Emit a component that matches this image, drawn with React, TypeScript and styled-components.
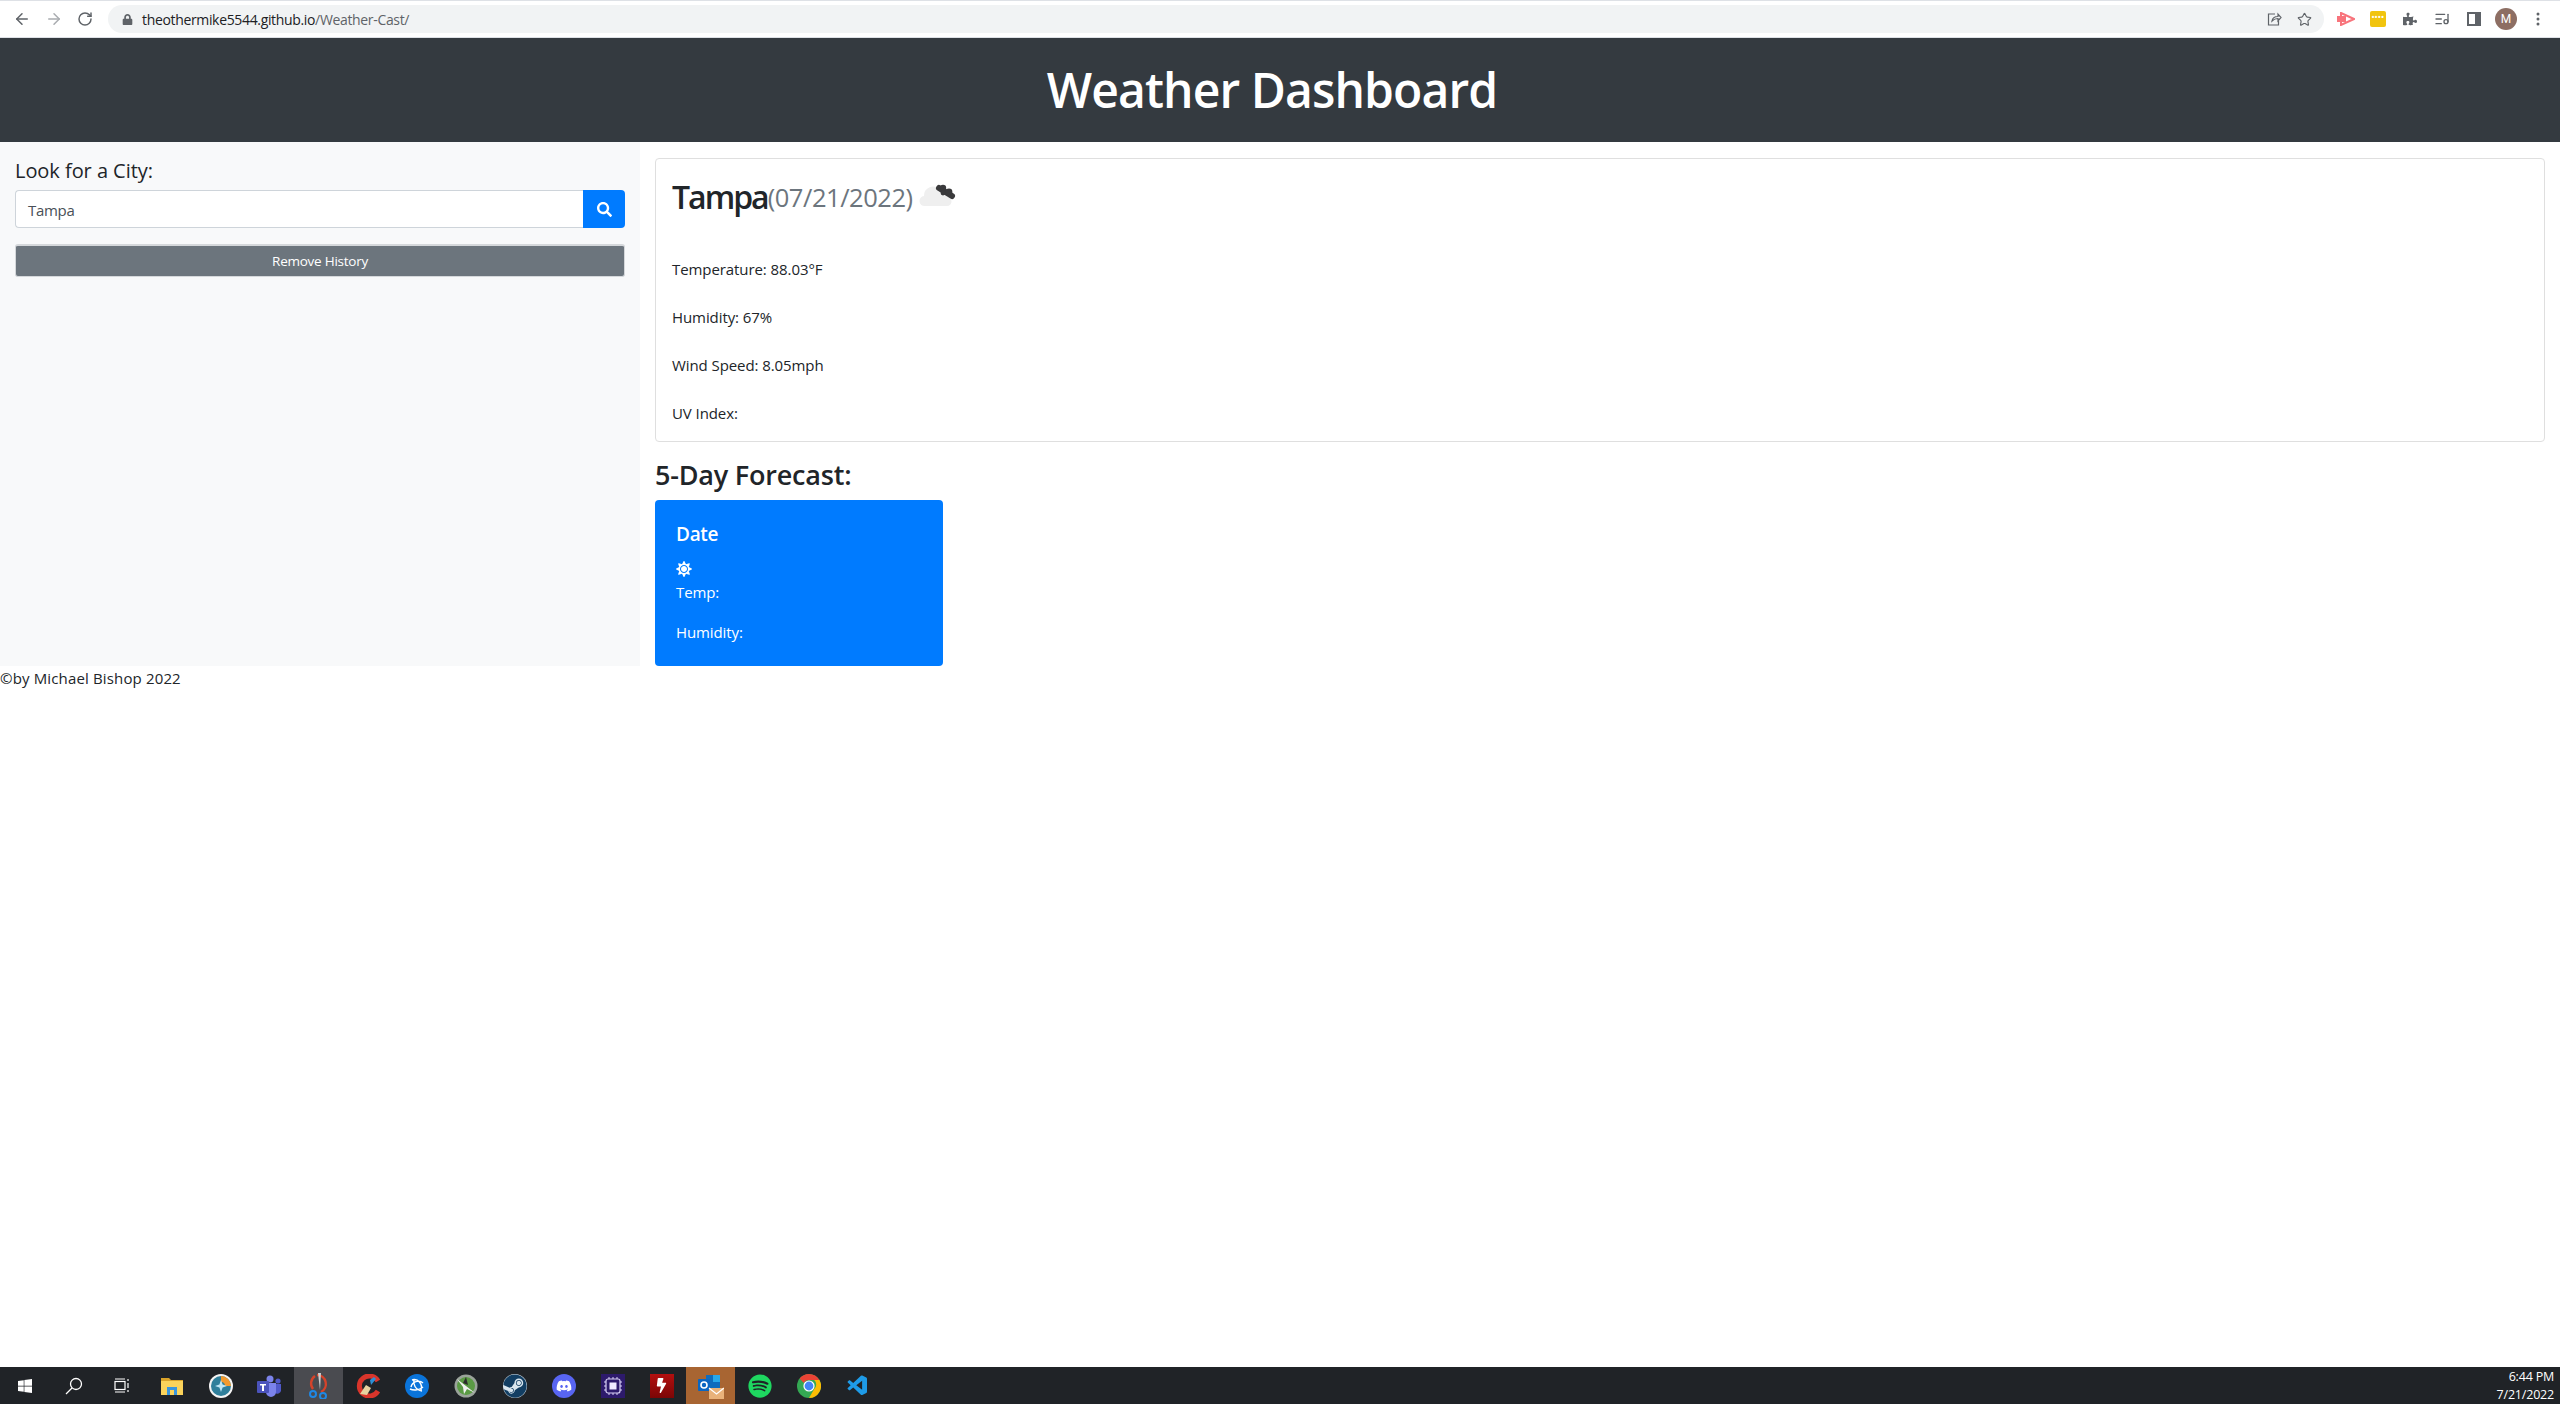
import React from "react";
import styled, { createGlobalStyle } from "styled-components";
import { ArrowLeft, ArrowRight, RotateCw, Star, ListMusic } from "lucide-react";
import { FaSearch, FaLock, FaPuzzlePiece, FaSun, FaWindows, FaSteam, FaDiscord, FaSpotify, FaBolt } from "react-icons/fa";
import { VscVscode } from "react-icons/vsc";

const Global = createGlobalStyle`
  html, body { margin: 0; padding: 0; background: #fff; }
  body { font-family: "Open Sans", "Noto Sans", "Liberation Sans", sans-serif; color: #212529; }
  #root { height: 1404px; overflow: hidden; }
  * { box-sizing: border-box; }
`;

const Page = styled.div`
  height: 1404px;
  display: flex;
  flex-direction: column;
`;

/* browser chrome */
const BrowserBar = styled.div`
  height: 38px;
  flex: none;
  display: flex;
  align-items: center;
  background: #fff;
  border-top: 1px solid #dee1e6;
  border-bottom: 1px solid #dee1e6;
  padding-left: 13px;
`;
const NavButton = styled.span<{ $muted?: boolean }>`
  width: 32px;
  height: 20px;
  flex: none;
  display: flex;
  justify-content: flex-start;
  align-items: center;
  color: ${(p) => (p.$muted ? "#a9acb0" : "#5f6368")};
`;
const Omnibox = styled.div`
  width: 2216px;
  height: 28px;
  margin-left: -1px;
  flex: none;
  display: flex;
  align-items: center;
  background: #f1f3f4;
  border-radius: 14px;
  padding: 0 4px 0 14px;
  color: #5f6368;
`;
const UrlText = styled.span`
  margin-left: 9px;
  font-size: 14px;
  letter-spacing: -0.34px;
  color: #202124;
  flex: 1;
`;
const UrlPath = styled.span`
  color: #5f6368;
`;
const OmniIcon = styled.span`
  width: 31px;
  display: flex;
  justify-content: center;
  color: #5f6368;
`;
const Extensions = styled.div`
  display: flex;
  align-items: center;
  margin-left: 6px;
`;
const ExtSlot = styled.span`
  width: 32px;
  height: 24px;
  display: flex;
  align-items: center;
  justify-content: center;
  color: #5f6368;
`;
const YellowExt = styled.span`
  width: 16px;
  height: 16px;
  border-radius: 2px;
  background: #f1c40f;
  color: #fff;
  font-size: 7px;
  font-weight: 700;
  letter-spacing: 0.5px;
  line-height: 14px;
  text-align: center;
`;
const Avatar = styled.span`
  width: 22px;
  height: 22px;
  border-radius: 50%;
  background: #8d6e63;
  color: #fff;
  font-size: 12px;
  line-height: 22px;
  text-align: center;
  font-family: "Roboto", sans-serif;
`;

/* app */
const Header = styled.header`
  height: 104px;
  flex: none;
  background: #343a40;
  display: flex;
  align-items: center;
  justify-content: center;
  padding-right: 16px;
`;
const Title = styled.h1`
  margin: 0;
  color: #fff;
  font-size: 48px;
  font-weight: 600;
  letter-spacing: -0.9px;
  line-height: 1;
`;
const Main = styled.main`
  display: flex;
  height: 524px;
  flex: none;
`;
const Sidebar = styled.aside`
  width: 640px;
  flex: none;
  background: #f8f9fa;
  padding: 15px 15px 0 15px;
`;
const SearchLabel = styled.div`
  font-size: 20px;
  font-weight: 500;
  line-height: 28px;
  letter-spacing: -0.05px;
  color: #212529;
`;
const SearchRow = styled.div`
  display: flex;
  height: 38px;
  margin-top: 5px;
`;
const SearchInput = styled.div`
  flex: 1;
  border: 1px solid #ced4da;
  border-right: 0;
  border-radius: 4px 0 0 4px;
  background: #fff;
  padding: 0 12px;
  font-size: 15px;
  line-height: 38px;
  letter-spacing: -0.3px;
  color: #495057;
`;
const SearchButton = styled.div`
  width: 42px;
  flex: none;
  background: #007bff;
  color: #fff;
  border-radius: 0 4px 4px 0;
  display: flex;
  align-items: center;
  justify-content: center;
`;
const RemoveButton = styled.div`
  height: 33px;
  margin-top: 16px;
  background: #6c757d;
  border: 1px solid #d5d8db;
  border-top-width: 2px;
  border-radius: 3px;
  color: #fff;
  font-size: 13.5px;
  font-weight: 500;
  line-height: 31px;
  letter-spacing: -0.25px;
  text-align: center;
`;
const Content = styled.section`
  flex: 1;
  padding: 16px 15px 0 15px;
  display: flex;
  flex-direction: column;
`;
const CurrentCard = styled.div`
  height: 284px;
  flex: none;
  border: 1px solid #dfdfdf;
  border-radius: 4px;
  padding: 14px 16px 16px;
`;
const CityRow = styled.div`
  display: flex;
  align-items: center;
  height: 46px;
  margin-bottom: 38px;
`;
const City = styled.span`
  font-size: 32px;
  font-weight: 600;
  letter-spacing: -2px;
`;
const DateText = styled.span`
  font-size: 25.5px;
  font-weight: 400;
  color: #6c757d;
  letter-spacing: -0.45px;
  margin-top: 2px;
`;
const Stat = styled.p`
  margin: 0 0 24px;
  font-size: 15px;
  line-height: 24px;
  letter-spacing: -0.08px;
  color: #212529;
`;
const ForecastTitle = styled.h3`
  margin: 16px 0 8px;
  font-size: 27px;
  line-height: 34px;
  font-weight: 600;
  letter-spacing: -0.2px;
`;
const ForecastCard = styled.div`
  width: 288px;
  height: 166px;
  flex: none;
  background: #007bff;
  color: #fff;
  border-radius: 4px;
  padding: 20px 21px;
`;
const CardDate = styled.div`
  font-size: 19px;
  font-weight: 600;
  line-height: 28px;
  letter-spacing: -0.3px;
`;
const SunSlot = styled.div`
  margin-top: 13px;
  margin-bottom: 3px;
  height: 16px;
  display: flex;
  align-items: center;
`;
const CardLine = styled.p`
  margin: 0 0 16px;
  font-size: 15px;
  line-height: 24px;
  letter-spacing: -0.1px;
`;
const Footer = styled.footer`
  flex: none;
  font-size: 15px;
  line-height: 24px;
  letter-spacing: 0.15px;
  color: #212529;
`;
const Spacer = styled.div`
  flex: 1;
`;

/* taskbar */
const Taskbar = styled.div`
  height: 37px;
  flex: none;
  display: flex;
  align-items: center;
  background: #202327;
`;
const TaskSlot = styled.span<{ $bg?: string; $color?: string }>`
  width: 49px;
  height: 37px;
  flex: none;
  display: flex;
  align-items: center;
  justify-content: center;
  background: ${(p) => p.$bg ?? "transparent"};
  color: ${(p) => p.$color ?? "#fff"};
`;
const Clock = styled.div`
  margin-left: auto;
  padding-right: 6px;
  color: #fff;
  font-family: "Open Sans", sans-serif;
  font-size: 12.5px;
  line-height: 18px;
  letter-spacing: -0.2px;
  text-align: right;
`;

const CloudIcon = () => (
  <svg width="38" height="26" viewBox="0 0 38 26" style={{ marginLeft: 6 }}>
    <path fill="#efefef" d="M6 23a5 5 0 0 1-1-10 9 9 0 0 1 15-7 7 7 0 0 1 8 8 4.500 4.500 0 0 1 0 9z" />
    <path fill="none" stroke="#3a3a3c" strokeWidth="6" strokeLinecap="round" d="M20 5l13 8" />
    <circle cx="24" cy="5" r="3.2" fill="#3a3a3c" />
    <circle cx="30" cy="9" r="3.4" fill="#3a3a3c" />
    <circle cx="24" cy="10" r="2.4" fill="#3a3a3c" />
  </svg>
);

const ShareIcon = () => (
  <svg width="16" height="16" viewBox="0 0 16 16" fill="none" stroke="#5f6368" strokeWidth="1.2">
    <path d="M9 3H2.500v11h10V10" />
    <path d="M6 10c.5-3 3-4.500 6-4.500V3l3 3.500L12 10V7.500c-2 0-4 .5-6 2.500z" />
  </svg>
);
const RedExt = () => (
  <svg width="18" height="14" viewBox="0 0 18 14">
    <rect x="0" y="4" width="4" height="6" fill="#f8747c" />
    <path d="M4 1l13 6-13 6z" fill="#fff" stroke="#f8747c" strokeWidth="2" />
    <rect x="4" y="4" width="5" height="6" fill="#f8747c" />
  </svg>
);
const SidePanel = () => (
  <svg width="14" height="14" viewBox="0 0 14 14">
    <rect x="1" y="1" width="12" height="12" fill="none" stroke="#5f6368" strokeWidth="2" />
    <rect x="8" y="1" width="5" height="12" fill="#5f6368" />
  </svg>
);
const Dots = () => (
  <svg width="4" height="14" viewBox="0 0 4 14" fill="#5f6368">
    <circle cx="2" cy="2" r="1.500" />
    <circle cx="2" cy="7" r="1.500" />
    <circle cx="2" cy="12" r="1.500" />
  </svg>
);

const SearchGlass = () => (
  <svg width="18" height="18" viewBox="0 0 18 18" fill="none" stroke="#fff" strokeWidth="1.3">
    <circle cx="11" cy="7" r="5.500" />
    <path d="M7 11l-6 6" />
  </svg>
);
const TaskView = () => (
  <svg width="17" height="15" viewBox="0 0 17 15" fill="none" stroke="#fff" strokeWidth="1.2">
    <rect x="1" y="3.500" width="10" height="8" />
    <path d="M1 1h10M1 14h10M14 1v2M14 5v5M14 12v2" />
  </svg>
);
const Folder = () => (
  <svg width="22" height="18" viewBox="0 0 22 18">
    <path fill="#d9a32a" d="M0 1h8l2 2h12v3H0z" />
    <rect y="4" width="22" height="14" fill="#fbd35b" />
    <rect x="6" y="10" width="10" height="8" fill="#3a96dd" />
    <rect x="9" y="13" width="4" height="5" fill="#fbd35b" />
  </svg>
);
const Compass = () => (
  <svg width="24" height="24" viewBox="0 0 24 24">
    <circle cx="12" cy="12" r="12" fill="#f4f4f4" />
    <circle cx="12" cy="12" r="10" fill="#2f7f9b" />
    <path d="M12 2a10 10 0 0 1 10 10h-6a4 4 0 0 0-4-4z" fill="#f29a2e" />
    <path d="M12 6l1.600 4.400L18 12l-4.400 1.600L12 18l-1.600-4.400L6 12l4.400-1.600z" fill="#bfe6f5" />
  </svg>
);
const Teams = () => (
  <svg width="25" height="22" viewBox="0 0 25 22">
    <circle cx="13" cy="4" r="3.500" fill="#7b83eb" />
    <circle cx="21" cy="6" r="2.600" fill="#5059c9" />
    <path d="M17 9h7v7a4 4 0 0 1-6 2z" fill="#5059c9" />
    <path d="M7 8h12v9a5 5 0 0 1-10 0z" fill="#7b83eb" />
    <rect x="0" y="6" width="12" height="12" rx="1" fill="#4b53bc" />
    <path d="M3 9h6v1.600H7V16H5v-5.400H3z" fill="#fff" />
  </svg>
);
const Snip = () => (
  <svg width="20" height="26" viewBox="0 0 20 26">
    <path d="M8 2a9 9 0 0 1 4 17" fill="none" stroke="#d5432a" strokeWidth="2.400" />
    <path d="M6 3a9 9 0 0 0-2 13" fill="none" stroke="#d5432a" strokeWidth="2.400" />
    <path d="M9 0h3l-1 17z" fill="#cfcfcf" />
    <circle cx="4" cy="21" r="3" fill="none" stroke="#1e88e5" strokeWidth="2" />
    <circle cx="14" cy="23" r="3" fill="none" stroke="#1e88e5" strokeWidth="2" />
  </svg>
);
const CCleaner = () => (
  <svg width="24" height="24" viewBox="0 0 24 24">
    <path d="M22 7a10 10 0 1 0 0 10" fill="none" stroke="#d9352b" strokeWidth="5" />
    <path d="M14 6l4-3 2 2-5 6z" fill="#2d8fd5" />
    <path d="M4 20l6-9 5 3-4 7z" fill="#e8d3a0" />
  </svg>
);
const Battle = () => (
  <svg width="24" height="24" viewBox="0 0 24 24">
    <circle cx="12" cy="12" r="12" fill="#0a74da" />
    <path d="M7 6c6-2 11 4 9 10M6 13c1-5 8-8 12-4M9 5c-1 5 1 11 8 12M5 15c4 2 10 1 13-2" fill="none" stroke="#fff" strokeWidth="1.400" />
  </svg>
);
const XboxLike = () => (
  <svg width="24" height="24" viewBox="0 0 24 24">
    <circle cx="12" cy="12" r="11.500" fill="#9aa39a" />
    <circle cx="12" cy="12" r="9" fill="#5a9a44" />
    <path d="M3 5l18 14-8-4-3 5-1-7z" fill="#f2f2f2" />
    <path d="M9 9l3-6 2 8z" fill="#2c2c2c" />
  </svg>
);
const Chip = () => (
  <svg width="24" height="24" viewBox="0 0 24 24">
    <rect width="24" height="24" fill="#2d1a6b" />
    <rect x="5" y="5" width="14" height="14" rx="2" fill="none" stroke="#d8d0f5" strokeWidth="1.200" />
    <rect x="8.500" y="8.500" width="7" height="7" fill="#efeaff" />
    <path d="M8 3v2M12 3v2M16 3v2M8 19v2M12 19v2M16 19v2M3 8h2M3 12h2M3 16h2M19 8h2M19 12h2M19 16h2" stroke="#d8d0f5" />
  </svg>
);
const Outlook = () => (
  <svg width="26" height="26" viewBox="0 0 26 26">
    <rect x="8" y="2" width="14" height="14" fill="#0f6cbd" />
    <rect x="15" y="2" width="7" height="7" fill="#28a8ea" />
    <rect x="0" y="6" width="12" height="12" rx="1" fill="#0a66c2" />
    <circle cx="6" cy="12" r="3" fill="none" stroke="#fff" strokeWidth="1.600" />
    <rect x="11" y="15" width="15" height="11" fill="#e9b27a" />
    <path d="M11 15l7.500 6 7.500-6" fill="none" stroke="#fff" strokeWidth="1.200" />
  </svg>
);
const Chrome = () => (
  <svg width="24" height="24" viewBox="0 0 24 24">
    <circle cx="12" cy="12" r="12" fill="#34a853" />
    <path d="M12 0a12 12 0 0 1 10.400 6H12a6 6 0 0 0-5.200 3L2.600 4.500A12 12 0 0 1 12 0z" fill="#ea4335" />
    <path d="M22.400 6A12 12 0 0 1 12 24l5.200-9a6 6 0 0 0 0-9z" fill="#fbbc04" />
    <circle cx="12" cy="12" r="5.600" fill="#fff" />
    <circle cx="12" cy="12" r="4.400" fill="#4285f4" />
  </svg>
);
const Round = styled.span<{ $bg: string }>`
  width: 24px;
  height: 24px;
  border-radius: 50%;
  background: ${(p) => p.$bg};
  display: flex;
  align-items: center;
  justify-content: center;
`;
const Square = styled.span`
  width: 24px;
  height: 24px;
  background: linear-gradient(#b30f0f, #7c0606);
  display: flex;
  align-items: center;
  justify-content: center;
  color: #fff;
`;

export default function App() {
  return (
    <Page>
      <Global />
      <BrowserBar>
        <NavButton><ArrowLeft size={18} strokeWidth={2} /></NavButton>
        <NavButton $muted><ArrowRight size={18} strokeWidth={2} /></NavButton>
        <NavButton><RotateCw size={16} strokeWidth={2.2} /></NavButton>
        <Omnibox>
          <FaLock size={11} />
          <UrlText>theothermike5544.github.io<UrlPath>/Weather-Cast/</UrlPath></UrlText>
          <OmniIcon><ShareIcon /></OmniIcon>
          <OmniIcon><Star size={15} strokeWidth={1.8} /></OmniIcon>
        </Omnibox>
        <Extensions>
          <ExtSlot><RedExt /></ExtSlot>
          <ExtSlot><YellowExt>••••</YellowExt></ExtSlot>
          <ExtSlot><FaPuzzlePiece size={14} /></ExtSlot>
          <ExtSlot><ListMusic size={16} /></ExtSlot>
          <ExtSlot><SidePanel /></ExtSlot>
          <ExtSlot><Avatar>M</Avatar></ExtSlot>
          <ExtSlot><Dots /></ExtSlot>
        </Extensions>
      </BrowserBar>
      <Header><Title>Weather Dashboard</Title></Header>
      <Main>
        <Sidebar>
          <SearchLabel>Look for a City:</SearchLabel>
          <SearchRow>
            <SearchInput>Tampa</SearchInput>
            <SearchButton><FaSearch size={15} /></SearchButton>
          </SearchRow>
          <RemoveButton>Remove History</RemoveButton>
        </Sidebar>
        <Content>
          <CurrentCard>
            <CityRow>
              <City>Tampa</City>
              <DateText>(07/21/2022)</DateText>
              <CloudIcon />
            </CityRow>
            <Stat>Temperature: 88.03°F</Stat>
            <Stat>Humidity: 67%</Stat>
            <Stat>Wind Speed: 8.05mph</Stat>
            <Stat>UV Index:</Stat>
          </CurrentCard>
          <ForecastTitle>5-Day Forecast:</ForecastTitle>
          <ForecastCard>
            <CardDate>Date</CardDate>
            <SunSlot><FaSun size={16} /></SunSlot>
            <CardLine>Temp:</CardLine>
            <CardLine>Humidity:</CardLine>
          </ForecastCard>
        </Content>
      </Main>
      <Footer>©by Michael Bishop 2022</Footer>
      <Spacer />
      <Taskbar>
        <TaskSlot><FaWindows size={16} /></TaskSlot>
        <TaskSlot><SearchGlass /></TaskSlot>
        <TaskSlot><TaskView /></TaskSlot>
        <TaskSlot><Folder /></TaskSlot>
        <TaskSlot><Compass /></TaskSlot>
        <TaskSlot><Teams /></TaskSlot>
        <TaskSlot $bg="#4a4b50"><Snip /></TaskSlot>
        <TaskSlot><CCleaner /></TaskSlot>
        <TaskSlot><Battle /></TaskSlot>
        <TaskSlot><XboxLike /></TaskSlot>
        <TaskSlot><Round $bg="#d9e6ef"><FaSteam size={24} color="#123e63" /></Round></TaskSlot>
        <TaskSlot><Round $bg="#5865f2"><FaDiscord size={16} /></Round></TaskSlot>
        <TaskSlot><Chip /></TaskSlot>
        <TaskSlot><Square><FaBolt size={15} /></Square></TaskSlot>
        <TaskSlot $bg="#a86532"><Outlook /></TaskSlot>
        <TaskSlot $color="#1ed760"><FaSpotify size={24} /></TaskSlot>
        <TaskSlot><Chrome /></TaskSlot>
        <TaskSlot $color="#1e9be8"><VscVscode size={24} /></TaskSlot>
        <Clock>6:44 PM<br />7/21/2022</Clock>
      </Taskbar>
    </Page>
  );
}
